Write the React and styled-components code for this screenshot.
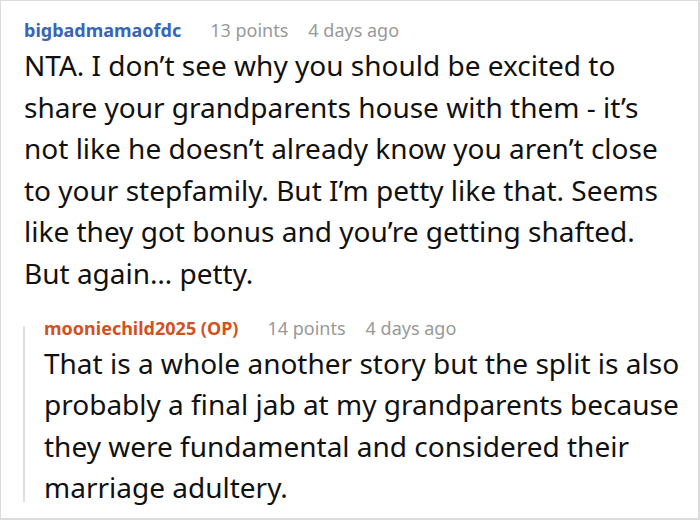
import React from 'react';
import styled, { createGlobalStyle } from 'styled-components';

const GlobalStyle = createGlobalStyle`
    html, body {
        margin: 0;
        padding: 0;
        background: #fff;
    }
    * {
        box-sizing: border-box;
    }
`;

const Frame = styled.div`
    width: 700px;
    height: 520px;
    border: 1px solid #dcdcdc;
    border-right-width: 2px;
    border-bottom-width: 2px;
    background: #fff;
    overflow: hidden;
    padding: 15px 11px 0 23px;
    font-family: "Noto Sans", "Open Sans", sans-serif;
`;

const Comment = styled.div`
    display: flex;
    flex-direction: column;
`;

const Reply = styled.div`
    position: relative;
    display: flex;
    flex-direction: column;
    margin-top: 19px;
    padding-left: 21px;
    margin-left: -1px;

    &::before {
        content: "";
        position: absolute;
        left: 0;
        top: 12px;
        bottom: 7px;
        width: 1.5px;
        background: #dedede;
    }
`;

const Meta = styled.div`
    display: flex;
    align-items: baseline;
    height: 29px;
    line-height: 28px;
`;

const User = styled.span`
    font-size: 18px;
    font-weight: 700;
    color: ${props => props.op ? '#d2521f' : '#3865b4'};
    margin-right: 29px;
`;

const Info = styled.span`
    font-size: 18px;
    color: #999;
    margin-right: 20px;
`;

const Body = styled.p`
    margin: 0;
    font-size: 28px;
    line-height: 41.6px;
    color: #111;
`;

const comments = {
    parent: {
        user: 'bigbadmamaofdc',
        points: '13 points',
        when: '4 days ago',
        text: 'NTA. I don’t see why you should be excited to share your grandparents house with them - it’s not like he doesn’t already know you aren’t close to your stepfamily. But I’m petty like that. Seems like they got bonus and you’re getting shafted. But again… petty.',
    },
    reply: {
        user: 'mooniechild2025 (OP)',
        points: '14 points',
        when: '4 days ago',
        text: 'That is a whole another story but the split is also probably a final jab at my grandparents because they were fundamental and considered their marriage adultery.',
    },
};

const App = () => {
    const { parent, reply } = comments;
    return (
        <>
            <GlobalStyle />
            <Frame>
                <Comment>
                    <Meta>
                        <User>{parent.user}</User>
                        <Info>{parent.points}</Info>
                        <Info>{parent.when}</Info>
                    </Meta>
                    <Body>{parent.text}</Body>
                </Comment>
                <Reply>
                    <Meta>
                        <User op>{reply.user}</User>
                        <Info>{reply.points}</Info>
                        <Info>{reply.when}</Info>
                    </Meta>
                    <Body>{reply.text}</Body>
                </Reply>
            </Frame>
        </>
    );
};

export default App;
